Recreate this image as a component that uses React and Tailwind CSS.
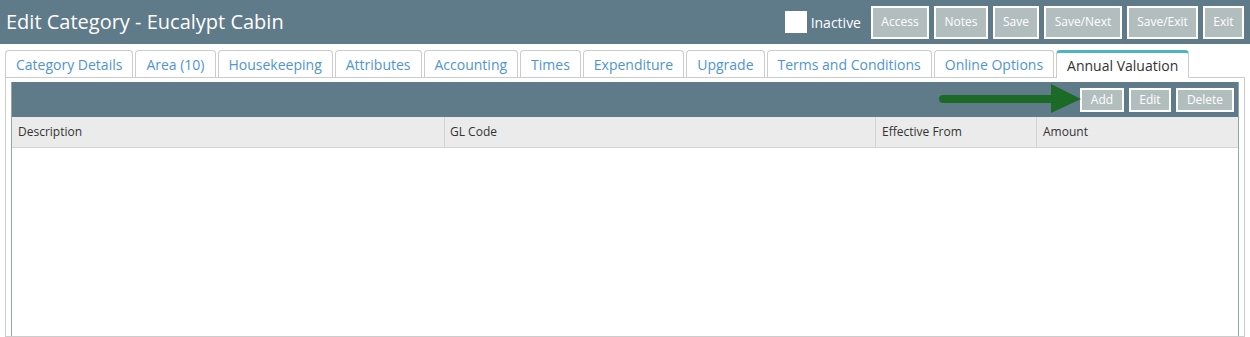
import React from "react";

const tabs = [
  "Category Details",
  "Area (10)",
  "Housekeeping",
  "Attributes",
  "Accounting",
  "Times",
  "Expenditure",
  "Upgrade",
  "Terms and Conditions",
  "Online Options",
];

const headerButtons = [
  { label: "Access", w: "w-[58px]" },
  { label: "Notes", w: "w-[54px]" },
  { label: "Save", w: "w-[46px]" },
  { label: "Save/Next", w: "w-[78px]" },
  { label: "Save/Exit", w: "w-[71px]" },
  { label: "Exit", w: "w-[41px]" },
];

function GreyButton({ label, className = "" }) {
  return (
    <button
      className={`bg-[#b2bebe] border-2 border-white text-white text-[12px] leading-none flex items-center justify-center ${className}`}
    >
      {label}
    </button>
  );
}

export default function App() {
  return (
    <div className="w-[1250px] h-[337px] bg-white overflow-hidden font-['Open_Sans',sans-serif] flex flex-col">
      {/* Header */}
      <div className="h-[44px] shrink-0 bg-[#5f7b89] flex items-center justify-between pl-[6px] pr-[6px]">
        <h1 className="text-[20px] text-white leading-none">Edit Category - Eucalypt Cabin</h1>
        <div className="flex items-center h-full">
          <div className="w-[22px] h-[22px] bg-white mr-[4px]" />
          <span className="text-[14px] text-white mr-[10px]">Inactive</span>
          <div className="flex gap-[5px] items-center">
            {headerButtons.map((b) => (
              <GreyButton key={b.label} label={b.label} className={`h-[33px] ${b.w}`} />
            ))}
          </div>
        </div>
      </div>

      {/* Tabs */}
      <div className="mt-[6px] pl-[5px] flex gap-[2px] items-end relative z-10">
        {tabs.map((t) => (
          <div
            key={t}
            className="h-[27px] px-[10px] flex items-center border border-b-0 border-[#cccccc] rounded-t-[4px] text-[14px] text-[#4f94d4] bg-white"
          >
            {t}
          </div>
        ))}
        <div className="h-[28px] -mb-px px-[10px] flex items-center border border-b-0 border-[#cccccc] border-t-[3px] border-t-[#4db6bd] rounded-t-[4px] text-[14px] text-[#333333] bg-white">
          Annual Valuation
        </div>
      </div>

      {/* Panel */}
      <div className="flex-1 mx-[5px] border border-[#cccccc] px-[5px] pt-[4px] flex flex-col">
        <div className="flex-1 border-x border-[#9aa5a9] flex flex-col">
          <div className="h-[35px] bg-[#5f7b89] flex items-center justify-end pr-[4px] gap-[5px] relative">
            <svg
              className="absolute left-[925px] top-[2px]"
              width="146"
              height="31"
              viewBox="0 0 146 31"
            >
              <line x1="6" y1="15" x2="120" y2="15" stroke="#1b6b27" strokeWidth="8" strokeLinecap="round" />
              <polygon points="114,0 144,15 114,29" fill="#1b6b27" />
            </svg>
            <GreyButton label="Add" className="h-[24px] w-[44px]" />
            <GreyButton label="Edit" className="h-[24px] w-[42px]" />
            <GreyButton label="Delete" className="h-[24px] w-[58px]" />
          </div>
          <div className="h-[31px] bg-[#ebebeb] border-b border-[#d4d4d4] flex text-[12px] text-[#333333]">
            <div className="w-[433px] flex items-center pl-[6px] border-r border-[#d4d4d4]">Description</div>
            <div className="w-[431px] flex items-center pl-[5px] border-r border-[#d4d4d4]">GL Code</div>
            <div className="w-[161px] flex items-center pl-[6px] border-r border-[#d4d4d4]">Effective From</div>
            <div className="flex-1 flex items-center pl-[6px]">Amount</div>
          </div>
          <div className="flex-1 bg-white" />
        </div>
      </div>
    </div>
  );
}
